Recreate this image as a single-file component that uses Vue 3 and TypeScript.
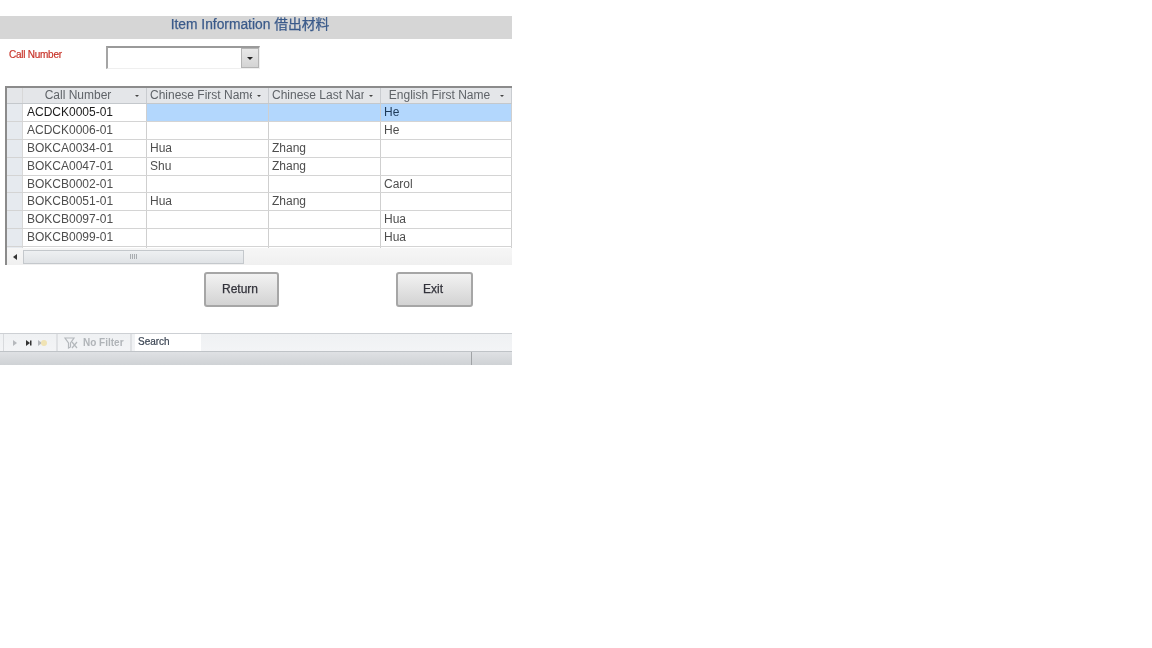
<script setup lang="ts">
interface Row { call: string; cnFirst: string; cnLast: string; enFirst: string }

const columns = ['Call Number', 'Chinese First Name', 'Chinese Last Name', 'English First Name']

const rows: Row[] = [
  { call: 'ACDCK0005-01', cnFirst: '', cnLast: '', enFirst: 'He' },
  { call: 'ACDCK0006-01', cnFirst: '', cnLast: '', enFirst: 'He' },
  { call: 'BOKCA0034-01', cnFirst: 'Hua', cnLast: 'Zhang', enFirst: '' },
  { call: 'BOKCA0047-01', cnFirst: 'Shu', cnLast: 'Zhang', enFirst: '' },
  { call: 'BOKCB0002-01', cnFirst: '', cnLast: '', enFirst: 'Carol' },
  { call: 'BOKCB0051-01', cnFirst: 'Hua', cnLast: 'Zhang', enFirst: '' },
  { call: 'BOKCB0097-01', cnFirst: '', cnLast: '', enFirst: 'Hua' },
  { call: 'BOKCB0099-01', cnFirst: '', cnLast: '', enFirst: 'Hua' },
]
</script>

<template>
  <div class="access-form">
    <h1 class="title">Item Information 借出材料</h1>

    <div class="filter">
      <label class="filter-label">Call Number</label>
      <div class="combo">
        <span class="combo-btn"><i class="arrow-down"></i></span>
      </div>
    </div>

    <div class="grid">
      <div class="grid-row head">
        <div class="selector corner"></div>
        <div v-for="(c, i) in columns" :key="c" class="cell" :class="{ center: i === 0 || i === 3 }">
          <span class="head-text">{{ c }}</span>
          <i class="arrow-small"></i>
        </div>
      </div>
      <div class="grid-body">
        <div v-for="(r, i) in rows" :key="r.call" class="grid-row" :class="{ active: i === 0 }">
          <div class="selector"></div>
          <div class="cell call">{{ r.call }}</div>
          <div class="cell">{{ r.cnFirst }}</div>
          <div class="cell">{{ r.cnLast }}</div>
          <div class="cell">{{ r.enFirst }}</div>
        </div>
        <div class="grid-row stub">
          <div class="selector"></div>
          <div class="cell"></div>
          <div class="cell"></div>
          <div class="cell"></div>
          <div class="cell"></div>
        </div>
      </div>
      <div class="hscroll">
        <span class="scroll-left"><i class="arrow-left"></i></span>
        <div class="thumb"><i class="grip"></i></div>
      </div>
    </div>

    <div class="actions">
      <button type="button" class="btn">Return</button>
      <button type="button" class="btn exit">Exit</button>
    </div>

    <div class="nav-bar">
      <div class="nav-arrows">
        <i class="nav-next"></i>
        <i class="nav-last"></i>
        <i class="nav-new"></i>
      </div>
      <div class="nav-filter">
        <svg width="16" height="12" viewBox="0 0 16 12">
          <path d="M2 1h9L7.5 6v4L5.500 11V6z" fill="none" stroke="#b4b8bc" stroke-width="1.200" />
          <path d="M9 5l5 6M14 5l-5 6" stroke="#b4b8bc" stroke-width="1.200" />
        </svg>
        <span>No Filter</span>
      </div>
      <div class="nav-search">Search</div>
    </div>
    <div class="status-bar">
      <div class="status-end"></div>
    </div>
  </div>
</template>

<style scoped>
.access-form {
  width: 512px;
  padding-top: 16px;
  font-family: "Liberation Sans", "Noto Sans CJK SC", sans-serif;
  filter: blur(0.65px);
}
.title {
  margin: 0;
  height: 23px;
  line-height: 17px;
  background: #d6d6d6;
  color: #3a5a8a;
  font-size: 13.800px;
  font-weight: normal;
  text-align: center;
  padding-right: 12px;
  box-sizing: border-box;
  -webkit-text-stroke: 0.25px #3a5a8a;
}
.filter {
  display: flex;
  height: 47px;
  padding: 7px 0 0 9px;
  box-sizing: border-box;
}
.filter-label {
  width: 97px;
  color: #c8352b;
  font-size: 10px;
  line-height: 17px;
  letter-spacing: -0.25px;
  -webkit-text-stroke: 0.2px #c8352b;
}
.combo {
  width: 154px;
  height: 23px;
  box-sizing: border-box;
  border: 1px solid #efefef;
  border-top: 2px solid #9a9a9a;
  border-left: 2px solid #a5a5a5;
  display: flex;
  justify-content: flex-end;
}
.combo-btn {
  width: 18px;
  height: 20px;
  box-sizing: border-box;
  border: 1px solid #b4b4b4;
  background: linear-gradient(#e8e8e8, #d4d4d4);
  display: flex;
  align-items: center;
  justify-content: center;
}
.arrow-down {
  width: 0;
  height: 0;
  border-left: 3px solid transparent;
  border-right: 3px solid transparent;
  border-top: 3px solid #222;
}
.grid {
  margin-left: 5px;
  width: 507px;
  height: 179px;
  box-sizing: border-box;
  border-top: 2px solid #8b8b8b;
  border-left: 2px solid #8b8b8b;
  display: flex;
  flex-direction: column;
  font-size: 12px;
  color: #4e4e4e;
}
.grid-row {
  display: grid;
  grid-template-columns: 16px 124px 122px 112px 131px;
  height: 17.900px;
  box-sizing: border-box;
  border-bottom: 1px solid #d4d4d4;
}
.grid-body {
  flex: 1;
  overflow: hidden;
  background: #fff;
}
.selector {
  background: #e6eaef;
  border-right: 1px solid #d8d8d8;
}
.corner {
  background: #e4e6e9;
}
.cell {
  border-right: 1px solid #cfcfcf;
  padding-left: 3px;
  line-height: 17px;
  white-space: nowrap;
  overflow: hidden;
}
.cell.call {
  padding-left: 4px;
}
.head {
  height: 16px;
  background: #e4e6e9;
  border-bottom: 1px solid #c4c8cc;
}
.head .cell {
  display: flex;
  align-items: center;
  justify-content: space-between;
  padding-right: 7px;
  line-height: 15px;
  color: #5f6368;
  border-right-color: #c9ccd0;
}
.head .cell.center .head-text {
  flex: 1;
  text-align: center;
}
.head-text {
  overflow: hidden;
  min-width: 0;
}
.arrow-small {
  flex: none;
  margin-left: 5px;
  width: 0;
  height: 0;
  border-left: 2px solid transparent;
  border-right: 2px solid transparent;
  border-top: 2px solid #444;
}
.active .cell {
  background: #b3d7fd;
  color: #1e3a58;
}
.active .cell.call {
  background: #fff;
  color: #1c1c1c;
}
.stub {
  border-bottom: none;
}
.hscroll {
  height: 17px;
  flex: none;
  display: flex;
  align-items: center;
  background: linear-gradient(#f6f6f6, #f0f0f0);
}
.scroll-left {
  width: 16px;
  display: flex;
  justify-content: center;
}
.arrow-left {
  width: 0;
  height: 0;
  border-top: 3px solid transparent;
  border-bottom: 3px solid transparent;
  border-right: 4px solid #333;
}
.thumb {
  width: 221px;
  height: 14px;
  box-sizing: border-box;
  border: 1px solid #c4c8cc;
  background: linear-gradient(#eef0f2, #e0e3e6);
  display: flex;
  align-items: center;
  justify-content: center;
}
.grip {
  width: 7px;
  height: 5px;
  background: repeating-linear-gradient(90deg, #a8acb0 0 1px, #e6e8ea 1px 2px);
}
.actions {
  display: flex;
  padding: 7px 0 0 204px;
  height: 68px;
  box-sizing: border-box;
  gap: 117px;
}
.btn {
  width: 75px;
  height: 35px;
  padding: 0 3px 2px 0;
  border: 2px solid #a6a6a6;
  border-radius: 3px;
  background: linear-gradient(#f2f2f2, #d3d3d3);
  font-family: inherit;
  font-size: 12px;
  color: #33333b;
  -webkit-text-stroke: 0.25px #33333b;
}
.exit {
  width: 77px;
}
.nav-bar {
  height: 18px;
  box-sizing: border-box;
  border-top: 1px solid #cdd0d4;
  background: linear-gradient(#eff1f3, #f3f4f6);
  display: flex;
  align-items: stretch;
  padding-left: 3px;
}
.nav-arrows {
  width: 55px;
  box-sizing: border-box;
  display: flex;
  align-items: center;
  gap: 9px;
  padding-left: 9px;
  border-left: 1px solid #d8dadd;
  border-right: 2px solid #dfe1e4;
}
.nav-next,
.nav-last,
.nav-new {
  width: 0;
  height: 0;
  border-top: 3px solid transparent;
  border-bottom: 3px solid transparent;
  border-left: 4px solid #b6b9bd;
}
.nav-last {
  border-left-color: #333;
  box-shadow: 2px 0 0 -0.500px #333;
}
.nav-new {
  position: relative;
  margin-left: -1px;
  margin-right: 6px;
}
.nav-new::after {
  content: "";
  position: absolute;
  left: -1px;
  top: -3px;
  width: 6px;
  height: 6px;
  border-radius: 50%;
  background: #f0e3b4;
}
.nav-filter {
  width: 74px;
  box-sizing: border-box;
  display: flex;
  align-items: center;
  gap: 4px;
  padding-left: 5px;
  font-size: 10px;
  font-weight: bold;
  color: #b0b4b8;
  border-right: 2px solid #dfe1e4;
  white-space: nowrap;
}
.nav-search {
  margin-left: 3px;
  width: 66px;
  background: #fff;
  font-size: 10px;
  line-height: 16px;
  padding-left: 3px;
  box-sizing: border-box;
  color: #3c4654;
  -webkit-text-stroke: 0.2px #3c4654;
}
.status-bar {
  height: 14px;
  box-sizing: border-box;
  border-top: 1px solid #bfc3c7;
  background: linear-gradient(#dfe1e4, #cfd2d5);
  display: flex;
  justify-content: flex-end;
}
.status-end {
  width: 40px;
  border-left: 1px solid #a0a3a6;
}
</style>

<style>
html, body { background: #fff; }
</style>
